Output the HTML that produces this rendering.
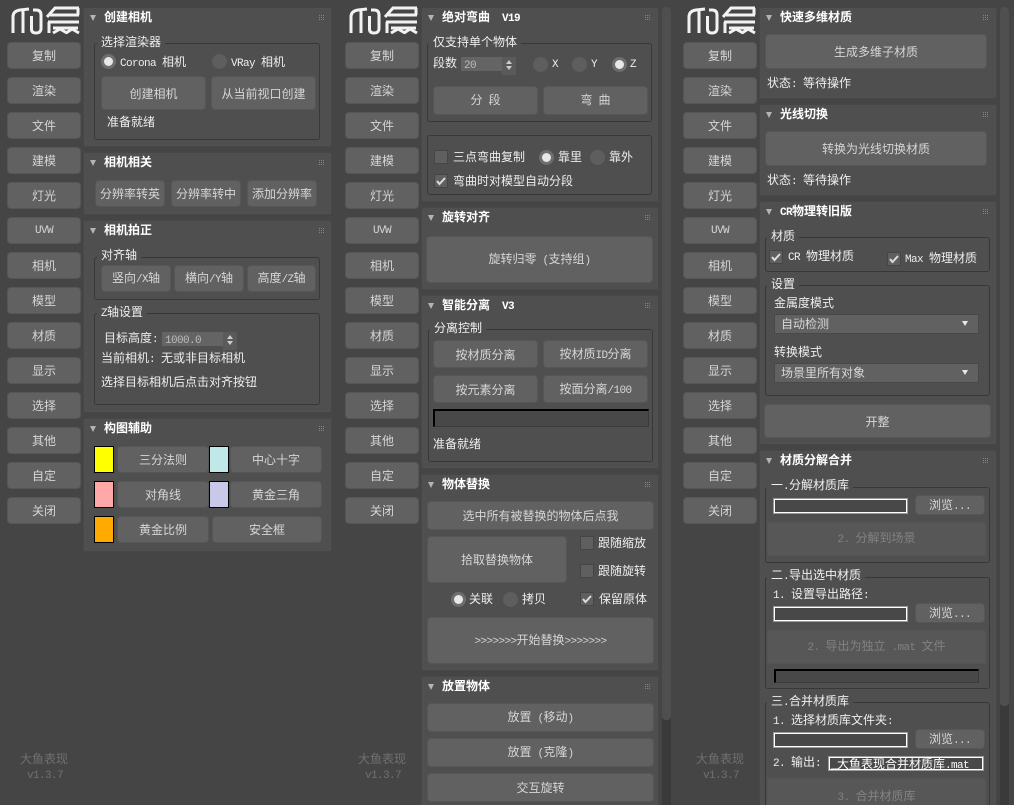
<!DOCTYPE html>
<html lang="zh"><head><meta charset="utf-8"><title>大鱼表现</title>
<style>
html,body{margin:0;padding:0;width:1014px;height:805px;overflow:hidden;background:#454545}
body{position:relative;font:12px/14px "WenQuanYi Zen Hei","Noto Sans CJK SC",sans-serif;color:#e6e6e6}
div{position:absolute;box-sizing:border-box}
.p{background:#4f4f4f;border:1px solid #474747;border-radius:2px;box-shadow:inset 0 0 0 1px #505050}
.h{color:#fff;font-weight:bold;white-space:pre;height:14px}
.tr{width:0;height:0;border-left:3.5px solid transparent;border-right:3.5px solid transparent;border-top:6px solid #b4b4b4}
.gr{width:6px;height:6px;background:conic-gradient(#858585 25%,transparent 0) 0 0/2px 2px}
.b{background:#616161;border:1px solid #565656;border-radius:4px;color:#d6d6d6;display:flex;align-items:center;justify-content:center;white-space:pre;padding-top:1px}
.d{background:#575757;border:1px solid #545454;border-radius:2px;color:#828282;display:flex;align-items:center;justify-content:center;white-space:pre}
.g{border:1px solid #383838;border-radius:3px}
.l{background:#4f4f4f;padding:0 4px;white-space:pre;height:14px;color:#f0f0f0}
.t{white-space:pre;height:14px;color:#eee}
.m{font:11px/14px "Liberation Mono",monospace;letter-spacing:-.6px}
.h .m{font-weight:bold}
.r{width:15px;height:15px;border-radius:50%;background:#5e5e5e}
.on{background:#6e6e6e}
.on::after{content:"";position:absolute;left:3px;top:3px;width:9px;height:9px;border-radius:50%;background:#e8e8e8}
.c{width:14px;height:14px;background:#5f5f5f;border:1px solid #454545}
.c svg{position:absolute;left:0;top:0}
.s{background:#646464;border-radius:1px;color:#bcbcbc;padding-left:3px;white-space:pre}
.sa{background:#5a5a5a}
.u{width:0;height:0;border-left:3px solid transparent;border-right:3px solid transparent;border-bottom:4px solid #ccc}
.n{width:0;height:0;border-left:3px solid transparent;border-right:3px solid transparent;border-top:4px solid #ccc}
.i{background:#484848;border:2px solid #fff;outline:1px solid #9a9a9a;outline-offset:-1px;color:#fff;white-space:pre;line-height:12px}
.pg{background:#484848;border-top:2px solid #000;border-left:2px solid #000;border-right:1px solid #3a3a3a;border-bottom:1px solid #3a3a3a}
.sel{background:#616161;border:1px solid #484848;color:#d8d8d8;padding-left:6px;line-height:18px;white-space:pre}
.sel::after{content:"";position:absolute;right:10px;top:6px;border-left:3.500px solid transparent;border-right:3.500px solid transparent;border-top:5px solid #e8e8e8}
.f{color:#707070;white-space:pre;height:14px}
.col{left:0;top:0;width:100px;height:805px}
.col .b{left:7px;width:74px;height:27px}
.tk{background:#3a3a3a;border-radius:4px;width:9px;height:805px;top:7px}
.th{background:#4f4f4f;border-radius:4px;width:9px;left:0;top:0}
svg{position:absolute}
</style></head><body>

<!-- sidebar 1 -->
<div class="col" style="left:0">
<svg style="left:0;top:0" width="90" height="40" fill="none" stroke="#f2f2f2" stroke-width="3"><path d="M13 33V17Q13 11 20 10L29 9M23 11V33M31.500 16V29Q31.500 33 36 33T41 29V15Q41 10 36 10H33M47 17L55 8H79M50 15H79M78 8V15M48 22H79M49 22V33M53 28H78M53 33L60 29L67 33M66 33L72 29L79 33"/></svg>
<div class="b" style="top:42px"><span>复制</span></div><div class="b" style="top:77px"><span>渲染</span></div><div class="b" style="top:112px"><span>文件</span></div><div class="b" style="top:147px"><span>建模</span></div><div class="b" style="top:182px"><span>灯光</span></div><div class="b" style="top:217px"><span class="m">UVW</span></div><div class="b" style="top:252px"><span>相机</span></div><div class="b" style="top:287px"><span>模型</span></div><div class="b" style="top:322px"><span>材质</span></div><div class="b" style="top:357px"><span>显示</span></div><div class="b" style="top:392px"><span>选择</span></div><div class="b" style="top:427px"><span>其他</span></div><div class="b" style="top:462px"><span>自定</span></div><div class="b" style="top:497px"><span>关闭</span></div>
<div class="f" style="left:20px;top:752px">大鱼表现</div><div class="f m" style="left:27px;top:769px">v1.3.7</div>
</div>
<!-- sidebar 2 -->
<div class="col" style="left:338px">
<svg style="left:0;top:0" width="90" height="40" fill="none" stroke="#f2f2f2" stroke-width="3"><path d="M13 33V17Q13 11 20 10L29 9M23 11V33M31.500 16V29Q31.500 33 36 33T41 29V15Q41 10 36 10H33M47 17L55 8H79M50 15H79M78 8V15M48 22H79M49 22V33M53 28H78M53 33L60 29L67 33M66 33L72 29L79 33"/></svg>
<div class="b" style="top:42px"><span>复制</span></div><div class="b" style="top:77px"><span>渲染</span></div><div class="b" style="top:112px"><span>文件</span></div><div class="b" style="top:147px"><span>建模</span></div><div class="b" style="top:182px"><span>灯光</span></div><div class="b" style="top:217px"><span class="m">UVW</span></div><div class="b" style="top:252px"><span>相机</span></div><div class="b" style="top:287px"><span>模型</span></div><div class="b" style="top:322px"><span>材质</span></div><div class="b" style="top:357px"><span>显示</span></div><div class="b" style="top:392px"><span>选择</span></div><div class="b" style="top:427px"><span>其他</span></div><div class="b" style="top:462px"><span>自定</span></div><div class="b" style="top:497px"><span>关闭</span></div>
<div class="f" style="left:20px;top:752px">大鱼表现</div><div class="f m" style="left:27px;top:769px">v1.3.7</div>
</div>
<!-- sidebar 3 -->
<div class="col" style="left:676px">
<svg style="left:0;top:0" width="90" height="40" fill="none" stroke="#f2f2f2" stroke-width="3"><path d="M13 33V17Q13 11 20 10L29 9M23 11V33M31.500 16V29Q31.500 33 36 33T41 29V15Q41 10 36 10H33M47 17L55 8H79M50 15H79M78 8V15M48 22H79M49 22V33M53 28H78M53 33L60 29L67 33M66 33L72 29L79 33"/></svg>
<div class="b" style="top:42px"><span>复制</span></div><div class="b" style="top:77px"><span>渲染</span></div><div class="b" style="top:112px"><span>文件</span></div><div class="b" style="top:147px"><span>建模</span></div><div class="b" style="top:182px"><span>灯光</span></div><div class="b" style="top:217px"><span class="m">UVW</span></div><div class="b" style="top:252px"><span>相机</span></div><div class="b" style="top:287px"><span>模型</span></div><div class="b" style="top:322px"><span>材质</span></div><div class="b" style="top:357px"><span>显示</span></div><div class="b" style="top:392px"><span>选择</span></div><div class="b" style="top:427px"><span>其他</span></div><div class="b" style="top:462px"><span>自定</span></div><div class="b" style="top:497px"><span>关闭</span></div>
<div class="f" style="left:20px;top:752px">大鱼表现</div><div class="f m" style="left:27px;top:769px">v1.3.7</div>
</div>

<!-- COLUMN 1 PANELS -->
<div class="p" style="left:83px;top:7px;width:249px;height:140px"></div>
<div class="tr" style="left:90px;top:15px"></div><div class="h" style="left:104px;top:10px">创建相机</div><div class="gr" style="left:318px;top:15px"></div>
<div class="g" style="left:94px;top:43px;width:226px;height:97px"></div>
<div class="l" style="left:97px;top:35px">选择渲染器</div>
<div class="r on" style="left:101px;top:54px"></div><div class="t" style="left:120px;top:55px"><span class="m">Corona </span>相机</div>
<div class="r" style="left:212px;top:54px"></div><div class="t" style="left:231px;top:55px"><span class="m">VRay </span>相机</div>
<div class="b" style="left:101px;top:76px;width:105px;height:34px"><span>创建相机</span></div>
<div class="b" style="left:211px;top:76px;width:105px;height:34px"><span>从当前视口创建</span></div>
<div class="t" style="left:107px;top:115px">准备就绪</div>

<div class="p" style="left:83px;top:152px;width:249px;height:63px"></div>
<div class="tr" style="left:90px;top:160px"></div><div class="h" style="left:104px;top:155px">相机相关</div><div class="gr" style="left:318px;top:160px"></div>
<div class="b" style="left:95px;top:180px;width:70px;height:27px"><span>分辨率转英</span></div>
<div class="b" style="left:171px;top:180px;width:70px;height:27px"><span>分辨率转中</span></div>
<div class="b" style="left:247px;top:180px;width:70px;height:27px"><span>添加分辨率</span></div>

<div class="p" style="left:83px;top:220px;width:249px;height:193px"></div>
<div class="tr" style="left:90px;top:228px"></div><div class="h" style="left:104px;top:223px">相机拍正</div><div class="gr" style="left:318px;top:228px"></div>
<div class="g" style="left:94px;top:257px;width:226px;height:43px"></div>
<div class="l" style="left:97px;top:248px">对齐轴</div>
<div class="b" style="left:101px;top:265px;width:70px;height:27px"><span>竖向<span class="m">/X</span>轴</span></div>
<div class="b" style="left:174px;top:265px;width:70px;height:27px"><span>横向<span class="m">/Y</span>轴</span></div>
<div class="b" style="left:247px;top:265px;width:69px;height:27px"><span>高度<span class="m">/Z</span>轴</span></div>
<div class="g" style="left:94px;top:313px;width:226px;height:92px"></div>
<div class="l" style="left:97px;top:305px"><span class="m">Z</span>轴设置</div>
<div class="t" style="left:104px;top:331px">目标高度<span class="m">:</span></div>
<div class="s" style="left:162px;top:332px;width:62px;height:14px"><span class="m">1000.0</span></div>
<div class="sa" style="left:223px;top:332px;width:14px;height:18px"><div class="u" style="left:4px;top:3px"></div><div class="n" style="left:4px;top:9px"></div></div>
<div class="t" style="left:101px;top:351px">当前相机<span class="m">: </span>无或非目标相机</div>
<div class="t" style="left:101px;top:375px">选择目标相机后点击对齐按钮</div>

<div class="p" style="left:83px;top:418px;width:249px;height:134px"></div>
<div class="tr" style="left:90px;top:426px"></div><div class="h" style="left:104px;top:421px">构图辅助</div><div class="gr" style="left:318px;top:426px"></div>
<div style="left:94px;top:446px;width:20px;height:27px;background:#ff0;border:1px solid #000"></div>
<div class="b" style="left:117px;top:446px;width:92px;height:27px"><span>三分法则</span></div>
<div style="left:209px;top:446px;width:20px;height:27px;background:#c0e8e8;border:1px solid #000"></div>
<div class="b" style="left:230px;top:446px;width:92px;height:27px"><span>中心十字</span></div>
<div style="left:94px;top:481px;width:20px;height:27px;background:#ffa8a8;border:1px solid #000"></div>
<div class="b" style="left:117px;top:481px;width:92px;height:27px"><span>对角线</span></div>
<div style="left:209px;top:481px;width:20px;height:27px;background:#c8c8e8;border:1px solid #000"></div>
<div class="b" style="left:230px;top:481px;width:92px;height:27px"><span>黄金三角</span></div>
<div style="left:94px;top:516px;width:20px;height:27px;background:#ffaa00;border:1px solid #000"></div>
<div class="b" style="left:117px;top:516px;width:92px;height:27px"><span>黄金比例</span></div>
<div class="b" style="left:212px;top:516px;width:110px;height:27px"><span>安全框</span></div>

<!-- COLUMN 2 -->
<div class="tk" style="left:662px"><div class="th" style="height:713px"></div></div>
<div class="p" style="left:421px;top:7px;width:238px;height:195px"></div>
<div class="tr" style="left:428px;top:15px"></div><div class="h" style="left:442px;top:10px">绝对弯曲<span class="m">  V19</span></div><div class="gr" style="left:644px;top:15px"></div>
<div class="g" style="left:427px;top:43px;width:225px;height:79px"></div>
<div class="l" style="left:429px;top:35px">仅支持单个物体</div>
<div class="t" style="left:433px;top:56px">段数</div>
<div class="s" style="left:461px;top:57px;width:42px;height:14px"><span class="m">20</span></div>
<div class="sa" style="left:502px;top:57px;width:14px;height:18px"><div class="u" style="left:4px;top:3px"></div><div class="n" style="left:4px;top:9px"></div></div>
<div class="r" style="left:533px;top:57px"></div><div class="t m" style="left:552px;top:58px">X</div>
<div class="r" style="left:572px;top:57px"></div><div class="t m" style="left:591px;top:58px">Y</div>
<div class="r on" style="left:612px;top:57px"></div><div class="t m" style="left:630px;top:58px">Z</div>
<div class="b" style="left:433px;top:86px;width:105px;height:29px"><span>分<span class="m"> </span>段</span></div>
<div class="b" style="left:543px;top:86px;width:105px;height:29px"><span>弯<span class="m"> </span>曲</span></div>
<div class="g" style="left:427px;top:135px;width:225px;height:60px"></div>
<div class="c" style="left:434px;top:150px"></div><div class="t" style="left:453px;top:150px">三点弯曲复制</div>
<div class="r on" style="left:539px;top:150px"></div><div class="t" style="left:558px;top:150px">靠里</div>
<div class="r" style="left:590px;top:150px"></div><div class="t" style="left:609px;top:150px">靠外</div>
<div class="c" style="left:434px;top:174px"><svg width="12" height="12" fill="none" stroke="#ddd" stroke-width="2"><path d="M2 6l2.500 3L10 3"/></svg></div><div class="t" style="left:453px;top:174px">弯曲时对模型自动分段</div>

<div class="p" style="left:421px;top:207px;width:238px;height:83px"></div>
<div class="tr" style="left:428px;top:215px"></div><div class="h" style="left:442px;top:210px">旋转对齐</div><div class="gr" style="left:644px;top:215px"></div>
<div class="b" style="left:426px;top:236px;width:227px;height:47px"><span>旋转归零<span class="m"> (</span>支持组<span class="m">)</span></span></div>

<div class="p" style="left:421px;top:295px;width:238px;height:174px"></div>
<div class="tr" style="left:428px;top:303px"></div><div class="h" style="left:442px;top:298px">智能分离<span class="m">  V3</span></div><div class="gr" style="left:644px;top:303px"></div>
<div class="g" style="left:428px;top:329px;width:225px;height:133px"></div>
<div class="l" style="left:430px;top:321px">分离控制</div>
<div class="b" style="left:433px;top:340px;width:105px;height:28px"><span>按材质分离</span></div>
<div class="b" style="left:543px;top:340px;width:105px;height:28px"><span>按材质<span class="m">ID</span>分离</span></div>
<div class="b" style="left:433px;top:375px;width:105px;height:28px"><span>按元素分离</span></div>
<div class="b" style="left:543px;top:375px;width:105px;height:28px"><span>按面分离<span class="m">/100</span></span></div>
<div class="pg" style="left:433px;top:409px;width:216px;height:18px"></div>
<div class="t" style="left:433px;top:437px">准备就绪</div>

<div class="p" style="left:421px;top:474px;width:238px;height:197px"></div>
<div class="tr" style="left:428px;top:482px"></div><div class="h" style="left:442px;top:477px">物体替换</div><div class="gr" style="left:644px;top:482px"></div>
<div class="b" style="left:427px;top:501px;width:227px;height:29px"><span>选中所有被替换的物体后点我</span></div>
<div class="b" style="left:427px;top:536px;width:140px;height:47px"><span>拾取替换物体</span></div>
<div class="c" style="left:580px;top:536px"></div><div class="t" style="left:598px;top:536px">跟随缩放</div>
<div class="c" style="left:580px;top:564px"></div><div class="t" style="left:598px;top:564px">跟随旋转</div>
<div class="c" style="left:580px;top:592px"><svg width="12" height="12" fill="none" stroke="#ddd" stroke-width="2"><path d="M2 6l2.500 3L10 3"/></svg></div><div class="t" style="left:599px;top:592px">保留原体</div>
<div class="r on" style="left:451px;top:592px"></div><div class="t" style="left:469px;top:592px">关联</div>
<div class="r" style="left:503px;top:592px"></div><div class="t" style="left:522px;top:592px">拷贝</div>
<div class="b" style="left:427px;top:617px;width:227px;height:47px"><span><span class="m">&gt;&gt;&gt;&gt;&gt;&gt;&gt;</span>开始替换<span class="m">&gt;&gt;&gt;&gt;&gt;&gt;&gt;</span></span></div>

<div class="p" style="left:421px;top:676px;width:238px;height:140px"></div>
<div class="tr" style="left:428px;top:684px"></div><div class="h" style="left:442px;top:679px">放置物体</div><div class="gr" style="left:644px;top:684px"></div>
<div class="b" style="left:427px;top:703px;width:227px;height:29px"><span>放置<span class="m"> (</span>移动<span class="m">)</span></span></div>
<div class="b" style="left:427px;top:738px;width:227px;height:29px"><span>放置<span class="m"> (</span>克隆<span class="m">)</span></span></div>
<div class="b" style="left:427px;top:773px;width:227px;height:29px"><span>交互旋转</span></div>

<!-- COLUMN 3 -->
<div class="tk" style="left:1000px"><div class="th" style="height:699px"></div></div>
<div class="p" style="left:759px;top:7px;width:238px;height:92px"></div>
<div class="tr" style="left:766px;top:15px"></div><div class="h" style="left:780px;top:10px">快速多维材质</div><div class="gr" style="left:982px;top:15px"></div>
<div class="b" style="left:765px;top:34px;width:222px;height:35px"><span>生成多维子材质</span></div>
<div class="t" style="left:767px;top:76px">状态<span class="m">: </span>等待操作</div>

<div class="p" style="left:759px;top:104px;width:238px;height:92px"></div>
<div class="tr" style="left:766px;top:112px"></div><div class="h" style="left:780px;top:107px">光线切换</div><div class="gr" style="left:982px;top:112px"></div>
<div class="b" style="left:765px;top:131px;width:222px;height:35px"><span>转换为光线切换材质</span></div>
<div class="t" style="left:767px;top:173px">状态<span class="m">: </span>等待操作</div>

<div class="p" style="left:759px;top:201px;width:238px;height:244px"></div>
<div class="tr" style="left:766px;top:209px"></div><div class="h" style="left:780px;top:204px"><span class="m">CR</span>物理转旧版</div><div class="gr" style="left:982px;top:209px"></div>
<div class="g" style="left:765px;top:237px;width:225px;height:35px"></div>
<div class="l" style="left:767px;top:229px">材质</div>
<div class="c" style="left:769px;top:250px"><svg width="12" height="12" fill="none" stroke="#ddd" stroke-width="2"><path d="M2 6l2.500 3L10 3"/></svg></div><div class="t" style="left:788px;top:249px"><span class="m">CR </span>物理材质</div>
<div class="c" style="left:887px;top:252px"><svg width="12" height="12" fill="none" stroke="#ddd" stroke-width="2"><path d="M2 6l2.500 3L10 3"/></svg></div><div class="t" style="left:905px;top:251px"><span class="m">Max </span>物理材质</div>
<div class="g" style="left:765px;top:285px;width:225px;height:111px"></div>
<div class="l" style="left:767px;top:277px">设置</div>
<div class="t" style="left:774px;top:296px">金属度模式</div>
<div class="sel" style="left:774px;top:314px;width:205px;height:20px">自动检测</div>
<div class="t" style="left:774px;top:345px">转换模式</div>
<div class="sel" style="left:774px;top:363px;width:205px;height:20px">场景里所有对象</div>
<div class="b" style="left:764px;top:404px;width:227px;height:34px"><span>开整</span></div>

<div class="p" style="left:759px;top:450px;width:238px;height:366px"></div>
<div class="tr" style="left:766px;top:458px"></div><div class="h" style="left:780px;top:453px">材质分解合并</div><div class="gr" style="left:982px;top:458px"></div>
<div class="g" style="left:765px;top:487px;width:225px;height:76px"></div>
<div class="l" style="left:767px;top:478px">一<span class="m">.</span>分解材质库</div>
<div class="i" style="left:773px;top:498px;width:135px;height:16px"></div>
<div class="b" style="left:915px;top:495px;width:70px;height:20px"><span>浏览<span class="m">...</span></span></div>
<div class="d" style="left:767px;top:522px;width:219px;height:34px"><span><span class="m">2. </span>分解到场景</span></div>
<div class="g" style="left:765px;top:577px;width:225px;height:112px"></div>
<div class="l" style="left:767px;top:568px">二<span class="m">.</span>导出选中材质</div>
<div class="t" style="left:773px;top:587px"><span class="m">1. </span>设置导出路径<span class="m">:</span></div>
<div class="i" style="left:773px;top:606px;width:135px;height:16px"></div>
<div class="b" style="left:915px;top:603px;width:70px;height:20px"><span>浏览<span class="m">...</span></span></div>
<div class="d" style="left:767px;top:630px;width:219px;height:34px"><span><span class="m">2. </span>导出为独立<span class="m"> .mat </span>文件</span></div>
<div class="pg" style="left:774px;top:669px;width:205px;height:14px"></div>
<div class="g" style="left:765px;top:702px;width:225px;height:120px"></div>
<div class="l" style="left:767px;top:694px">三<span class="m">.</span>合并材质库</div>
<div class="t" style="left:773px;top:713px"><span class="m">1. </span>选择材质库文件夹<span class="m">:</span></div>
<div class="i" style="left:773px;top:732px;width:135px;height:16px"></div>
<div class="b" style="left:915px;top:729px;width:70px;height:20px"><span>浏览<span class="m">...</span></span></div>
<div class="t" style="left:773px;top:755px"><span class="m">2. </span>输出<span class="m">:</span></div>
<div class="i" style="left:828px;top:756px;width:156px;height:15px;padding-left:1px"><span class="m">_</span>大鱼表现合并材质库<span class="m">.mat</span></div>
<div class="d" style="left:767px;top:778px;width:219px;height:34px;align-items:flex-start;padding-top:10px"><span><span class="m">3. </span>合并材质库</span></div>

</body></html>
